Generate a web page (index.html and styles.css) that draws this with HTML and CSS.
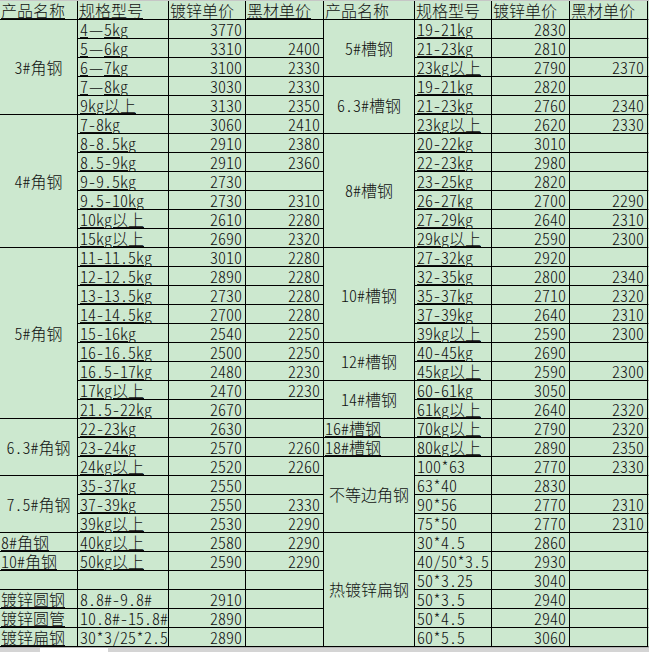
FILE: index.html
```html
<!DOCTYPE html>
<html lang="zh">
<head>
<meta charset="utf-8">
<title>价格表</title>
<link rel="stylesheet" href="styles.css">
</head>
<body>
<div class="sheet">
<table class="grid">
<colgroup>
<col class="w1"><col class="w2"><col class="w3"><col class="w4">
<col class="w5"><col class="w6"><col class="w7"><col class="w8"><col class="w9">
</colgroup>
<tbody>
<tr class="head">
<td class="l u">产品名称</td><td class="l u">规格型号</td><td class="l">镀锌单价</td><td class="l u">黑材单价</td>
<td class="l">产品名称</td><td class="l">规格型号</td><td class="l">镀锌单价</td><td class="l">黑材单价</td><td class="x"></td>
</tr>
<tr>
<td class="m" rowspan="5">3#角钢</td><td class="s"><span class="u">4<span class="dash">—</span>5kg</span></td><td class="n">3770</td><td class="n"></td>
<td class="m" rowspan="3">5#槽钢</td><td class="s"><span class="u">19-21kg</span></td><td class="n">2830</td><td class="n"></td><td class="x"></td>
</tr>
<tr>
<td class="s"><span class="u">5<span class="dash">—</span>6kg</span></td><td class="n">3310</td><td class="n">2400</td>
<td class="s"><span class="u">21-23kg</span></td><td class="n">2810</td><td class="n"></td><td class="x"></td>
</tr>
<tr>
<td class="s"><span class="u">6<span class="dash">—</span>7kg</span></td><td class="n">3100</td><td class="n">2330</td>
<td class="s"><span class="u">23kg以上</span></td><td class="n">2790</td><td class="n">2370</td><td class="x"></td>
</tr>
<tr>
<td class="s"><span class="u">7<span class="dash">—</span>8kg</span></td><td class="n">3030</td><td class="n">2330</td>
<td class="m" rowspan="3">6.3#槽钢</td><td class="s"><span class="u">19-21kg</span></td><td class="n">2820</td><td class="n"></td><td class="x"></td>
</tr>
<tr>
<td class="s"><span class="u">9kg以上</span></td><td class="n">3130</td><td class="n">2350</td>
<td class="s"><span class="u">21-23kg</span></td><td class="n">2760</td><td class="n">2340</td><td class="x"></td>
</tr>
<tr>
<td class="m" rowspan="7">4#角钢</td><td class="s"><span class="u">7-8kg</span></td><td class="n">3060</td><td class="n">2410</td>
<td class="s"><span class="u">23kg以上</span></td><td class="n">2620</td><td class="n">2330</td><td class="x"></td>
</tr>
<tr>
<td class="s"><span class="u">8-8.5kg</span></td><td class="n">2910</td><td class="n">2380</td>
<td class="m" rowspan="6">8#槽钢</td><td class="s"><span class="u">20-22kg</span></td><td class="n">3010</td><td class="n"></td><td class="x"></td>
</tr>
<tr>
<td class="s"><span class="u">8.5-9kg</span></td><td class="n">2910</td><td class="n">2360</td>
<td class="s"><span class="u">22-23kg</span></td><td class="n">2980</td><td class="n"></td><td class="x"></td>
</tr>
<tr>
<td class="s"><span class="u">9-9.5kg</span></td><td class="n">2730</td><td class="n"></td>
<td class="s"><span class="u">23-25kg</span></td><td class="n">2820</td><td class="n"></td><td class="x"></td>
</tr>
<tr>
<td class="s"><span class="u">9.5-10kg</span></td><td class="n">2730</td><td class="n">2310</td>
<td class="s"><span class="u">26-27kg</span></td><td class="n">2700</td><td class="n">2290</td><td class="x"></td>
</tr>
<tr>
<td class="s"><span class="u">10kg以上</span></td><td class="n">2610</td><td class="n">2280</td>
<td class="s"><span class="u">27-29kg</span></td><td class="n">2640</td><td class="n">2310</td><td class="x"></td>
</tr>
<tr>
<td class="s"><span class="u">15kg以上</span></td><td class="n">2690</td><td class="n">2320</td>
<td class="s"><span class="u">29kg以上</span></td><td class="n">2590</td><td class="n">2300</td><td class="x"></td>
</tr>
<tr>
<td class="m" rowspan="9">5#角钢</td><td class="s"><span class="u">11-11.5kg</span></td><td class="n">3010</td><td class="n">2280</td>
<td class="m" rowspan="5">10#槽钢</td><td class="s"><span class="u">27-32kg</span></td><td class="n">2920</td><td class="n"></td><td class="x"></td>
</tr>
<tr>
<td class="s"><span class="u">12-12.5kg</span></td><td class="n">2890</td><td class="n">2280</td>
<td class="s"><span class="u">32-35kg</span></td><td class="n">2800</td><td class="n">2340</td><td class="x"></td>
</tr>
<tr>
<td class="s"><span class="u">13-13.5kg</span></td><td class="n">2730</td><td class="n">2280</td>
<td class="s"><span class="u">35-37kg</span></td><td class="n">2710</td><td class="n">2320</td><td class="x"></td>
</tr>
<tr>
<td class="s"><span class="u">14-14.5kg</span></td><td class="n">2700</td><td class="n">2280</td>
<td class="s"><span class="u">37-39kg</span></td><td class="n">2640</td><td class="n">2310</td><td class="x"></td>
</tr>
<tr>
<td class="s"><span class="u">15-16kg</span></td><td class="n">2540</td><td class="n">2250</td>
<td class="s"><span class="u">39kg以上</span></td><td class="n">2590</td><td class="n">2300</td><td class="x"></td>
</tr>
<tr>
<td class="s"><span class="u">16-16.5kg</span></td><td class="n">2500</td><td class="n">2250</td>
<td class="m" rowspan="2">12#槽钢</td><td class="s"><span class="u">40-45kg</span></td><td class="n">2690</td><td class="n"></td><td class="x"></td>
</tr>
<tr>
<td class="s"><span class="u">16.5-17kg</span></td><td class="n">2480</td><td class="n">2230</td>
<td class="s"><span class="u">45kg以上</span></td><td class="n">2590</td><td class="n">2300</td><td class="x"></td>
</tr>
<tr>
<td class="s"><span class="u">17kg以上</span></td><td class="n">2470</td><td class="n">2230</td>
<td class="m" rowspan="2">14#槽钢</td><td class="s"><span class="u">60-61kg</span></td><td class="n">3050</td><td class="n"></td><td class="x"></td>
</tr>
<tr>
<td class="s"><span class="u">21.5-22kg</span></td><td class="n">2670</td><td class="n"></td>
<td class="s"><span class="u">61kg以上</span></td><td class="n">2640</td><td class="n">2320</td><td class="x"></td>
</tr>
<tr>
<td class="m" rowspan="3">6.3#角钢</td><td class="s"><span class="u">22-23kg</span></td><td class="n">2630</td><td class="n"></td>
<td class="l u">16#槽钢</td><td class="s"><span class="u">70kg以上</span></td><td class="n">2790</td><td class="n">2320</td><td class="x"></td>
</tr>
<tr>
<td class="s"><span class="u">23-24kg</span></td><td class="n">2570</td><td class="n">2260</td>
<td class="l u">18#槽钢</td><td class="s"><span class="u">80kg以上</span></td><td class="n">2890</td><td class="n">2350</td><td class="x"></td>
</tr>
<tr>
<td class="s"><span class="u">24kg以上</span></td><td class="n">2520</td><td class="n">2260</td>
<td class="m" rowspan="4">不等边角钢</td><td class="s">100*63</td><td class="n">2770</td><td class="n">2330</td><td class="x"></td>
</tr>
<tr>
<td class="m" rowspan="3">7.5#角钢</td><td class="s"><span class="u">35-37kg</span></td><td class="n">2550</td><td class="n"></td>
<td class="s">63*40</td><td class="n">2830</td><td class="n"></td><td class="x"></td>
</tr>
<tr>
<td class="s"><span class="u">37-39kg</span></td><td class="n">2550</td><td class="n">2330</td>
<td class="s">90*56</td><td class="n">2770</td><td class="n">2310</td><td class="x"></td>
</tr>
<tr>
<td class="s"><span class="u">39kg以上</span></td><td class="n">2530</td><td class="n">2290</td>
<td class="s">75*50</td><td class="n">2770</td><td class="n">2310</td><td class="x"></td>
</tr>
<tr>
<td class="l u">8#角钢</td><td class="s"><span class="u">40kg以上</span></td><td class="n">2580</td><td class="n">2290</td>
<td class="m" rowspan="6">热镀锌扁钢</td><td class="s">30*4.5</td><td class="n">2860</td><td class="n"></td><td class="x"></td>
</tr>
<tr>
<td class="l u">10#角钢</td><td class="s"><span class="u">50kg以上</span></td><td class="n">2590</td><td class="n">2290</td>
<td class="s">40/50*3.5</td><td class="n">2930</td><td class="n"></td><td class="x"></td>
</tr>
<tr>
<td class="l"></td><td class="s"></td><td class="n"></td><td class="n"></td>
<td class="s">50*3.25</td><td class="n">3040</td><td class="n"></td><td class="x"></td>
</tr>
<tr>
<td class="l u">镀锌圆钢</td><td class="s">8.8#-9.8#</td><td class="n">2910</td><td class="n"></td>
<td class="s">50*3.5</td><td class="n">2940</td><td class="n"></td><td class="x"></td>
</tr>
<tr>
<td class="l u">镀锌圆管</td><td class="s">10.8#-15.8#</td><td class="n">2890</td><td class="n"></td>
<td class="s">50*4.5</td><td class="n">2940</td><td class="n"></td><td class="x"></td>
</tr>
<tr>
<td class="l u">镀锌扁钢</td><td class="s">30*3/25*2.5</td><td class="n">2890</td><td class="n"></td>
<td class="s">60*5.5</td><td class="n">3060</td><td class="n"></td><td class="x"></td>
</tr>
</tbody>
</table>
<div class="tabs"><span class="tab"></span></div>
</div>
</body>
</html>
```
FILE: styles.css
```css
html, body {
  margin: 0;
  padding: 0;
  background: #cce8cf;
}
.sheet {
  width: 649px;
  height: 652px;
  overflow: hidden;
  display: flex;
  flex-direction: column;
  border-top: 1px solid #c6c6c6;
  box-sizing: border-box;
}
.grid {
  border-collapse: separate;
  border-spacing: 0;
  table-layout: fixed;
  width: 658px;
  flex: none;
  font-family: "Noto Sans CJK SC", sans-serif;
  font-feature-settings: "hwid" 1;
  font-weight: 300;
  font-size: 16px;
  color: #111;
}
.w1 { width: 78px; }
.w2 { width: 91px; }
.w3 { width: 77px; }
.w4 { width: 78px; }
.w5 { width: 91px; }
.w6 { width: 77px; }
.w7 { width: 78px; }
.w8 { width: 78px; }
.w9 { width: 10px; }
.grid td {
  height: 19px;
  padding: 0 2px;
  border-right: 1px solid #000;
  border-bottom: 1px solid #000;
  line-height: 17px;
  vertical-align: bottom;
  white-space: nowrap;
  overflow: hidden;
  box-sizing: border-box;
}
.grid tr { height: 19px; }
.grid td.x {
  border-right: none;
  border-bottom: 1px solid #8a8a8a;
}
.grid td.l { text-align: left; padding-left: 1px; }
.grid td.s { text-align: left; padding-left: 2px; }
.grid td.n { text-align: right; padding-right: 3px; }
.grid td.m { text-align: center; vertical-align: middle; padding: 0; }
.u {
  text-decoration: underline;
  text-underline-offset: 1px;
  text-decoration-thickness: 1px;
}
.dash {
  font-feature-settings: normal;
  display: inline-block;
  width: 16px;
  text-align: center;
}
.tabs {
  flex: 1;
  background: #d4d4d4;
  border-top: 1px solid #b5b5b5;
}
.tab {
  display: block;
  margin-left: 40px;
  width: 68px;
  height: 100%;
  background: #ffffff;
}
```
